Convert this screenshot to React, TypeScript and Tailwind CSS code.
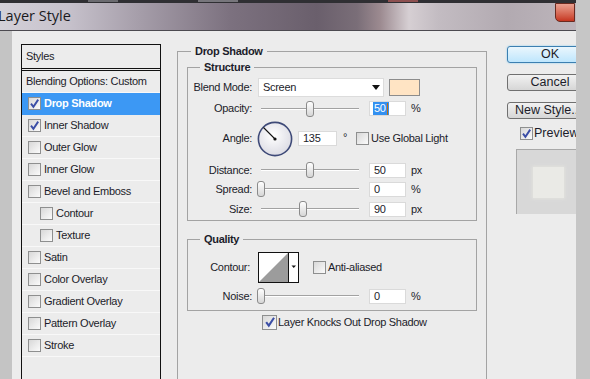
import React from "react";

function Check({ on }: { on?: boolean }) {
  return (
    <span className="flex h-[13px] w-[13px] shrink-0 items-center justify-center border border-[#8e8f8f] bg-linear-to-br from-[#d8d8d8] to-[#fbfbfb]">
      {on && (
        <svg viewBox="0 0 11 11" className="h-[11px] w-[11px]">
          <path d="M2 5.6 L4.4 8.8 L9.2 1.6" fill="none" stroke="#3b4ea6" strokeWidth="1.9" />
        </svg>
      )}
    </span>
  );
}

function Slider({ value, max }: { value: number; max: number }) {
  const left = Math.round((value / max) * 98);
  return (
    <div className="relative h-[18px] w-[106px] shrink-0">
      <div className="absolute left-[4px] right-[4px] top-[8px] h-[2px] border-t border-[#a2a2a2] bg-white" />
      <div
        className="absolute top-[1px] h-[16px] w-[8px] rounded-[3px] border border-[#8b8b8b] bg-linear-to-b from-white to-[#d6d6d6]"
        style={{ left }}
      />
    </div>
  );
}

function Field({ w, children, selected }: { w: string; children: React.ReactNode; selected?: boolean }) {
  return (
    <div className={`flex h-[15px] shrink-0 items-center border border-[#dadada] bg-white pl-[3px] ${w}`}>
      {selected ? (
        <span className="flex items-center bg-[#3390f0] px-[1px] leading-[13px] text-white">
          {children}
          <span className="ml-px h-[12px] w-px bg-[#c07010]" />
        </span>
      ) : (
        <span className="pl-[1px]">{children}</span>
      )}
    </div>
  );
}

function SliderRow({ label, value, max, unit }: { label: string; value: number; max: number; unit: string }) {
  return (
    <div className="flex h-[20px] items-center">
      <div className="w-[64px] shrink-0 text-right">{label}</div>
      <div className="ml-[5px]">
        <Slider value={value} max={max} />
      </div>
      <div className="ml-[6px]">
        <Field w="w-[37px]">{value}</Field>
      </div>
      <span className="ml-[5px]">{unit}</span>
    </div>
  );
}

const styles: { label: string; on?: boolean; sub?: boolean; active?: boolean }[] = [
  { label: "Drop Shadow", on: true, active: true },
  { label: "Inner Shadow", on: true },
  { label: "Outer Glow" },
  { label: "Inner Glow" },
  { label: "Bevel and Emboss" },
  { label: "Contour", sub: true },
  { label: "Texture", sub: true },
  { label: "Satin" },
  { label: "Color Overlay" },
  { label: "Gradient Overlay" },
  { label: "Pattern Overlay" },
  { label: "Stroke" },
];

export default function App() {
  return (
    <div className="flex h-[379px] w-[590px] overflow-hidden bg-[#c6c6c6] font-['Liberation_Sans',Arial,sans-serif] text-[11px] tracking-[-0.3px] text-[#1c1c2a]">
      <div className="flex w-[576px] shrink-0 flex-col">
        {/* window behind */}
        <div className="flex h-[3px] bg-[#2f2f33]">
          <div className="ml-[88px] h-[2px] w-[30px] bg-[#6b6b70]" />
          <div className="ml-[80px] h-[2px] w-[40px] bg-[#77767c]" />
          <div className="ml-[150px] h-[2px] w-[30px] bg-[#8d5050]" />
        </div>
        {/* title bar */}
        <div className="flex h-[27px] items-center bg-[linear-gradient(90deg,#d3d0d8_0%,#c6c1cb_12%,#a69eaa_24%,#7c717f_40%,#6a5f6c_55%,#7a6e78_62%,#9c8a90_66%,#d6cfd3_71%,#c3bcc2_76%,#b2aab1_88%,#bdb5bb_100%)]">
          <span className="ml-[-2px] text-[14.5px] leading-none tracking-normal text-[#1a1a1e] font-['Open_Sans',sans-serif]">Layer Style</span>
          <div className="ml-auto mr-px h-[19px] w-[20px] self-start rounded-bl-[5px] border border-[#6a2a20] bg-linear-to-b from-[#e9a090] to-[#c5341f]" />
        </div>
        <div className="h-px bg-[#4c4a50]" />

        <div className="flex min-h-0 flex-1">
          <div className="w-[12px] shrink-0 bg-[#c4c4c4]" />
          <div className="flex min-w-0 flex-1 overflow-hidden bg-[#ececec] pl-[9px] pt-[13px]">
            {/* Styles list */}
            <div className="w-[140px] shrink-0 self-stretch border border-b-0 border-[#111]">
              <div className="flex h-[23px] items-center pl-[4px]">Styles</div>
              <div className="h-[3px] border-y border-[#111]" />
              <div className="flex h-[22px] items-center border-b border-[#f8f8f8] pl-[4px]">Blending Options: Custom</div>
              {styles.map((s) => (
                <div
                  key={s.label}
                  className={`flex h-[22px] items-center gap-[2px] border-b ${
                    s.active ? "border-[#3c98f4] bg-[#3c98f4] font-bold text-white" : "border-[#f8f8f8]"
                  } ${s.sub ? "pl-[18px]" : "pl-[6px]"}`}
                >
                  <Check on={s.on} />
                  <span className="ml-px">{s.label}</span>
                </div>
              ))}
            </div>

            {/* Drop Shadow group */}
            <fieldset className="ml-[16px] h-[400px] w-[310px] shrink-0 border border-[#a3a3a3] px-[9px]">
              <legend className="ml-[4px] px-[4px] font-bold leading-[14px]">Drop Shadow</legend>

              <fieldset className="mt-[2px] border border-[#a3a3a3] pb-[1px]">
                <legend className="ml-[12px] px-[4px] font-bold leading-[14px]">Structure</legend>
                <div className="mt-[3px] flex h-[20px] items-center">
                  <div className="w-[64px] shrink-0 text-right">Blend Mode:</div>
                  <div className="ml-[6px] flex h-[19px] w-[126px] items-center justify-between border border-[#dcdcdc] bg-white pl-[4px] pr-[3px]">
                    <span>Screen</span>
                    <svg viewBox="0 0 8 5" className="h-[5px] w-[8px]">
                      <path d="M0 0 H8 L4 5 Z" fill="#111" />
                    </svg>
                  </div>
                  <div className="ml-[5px] h-[17px] w-[31px] border border-[#8c8c8c] bg-[#ffe4c4]" />
                </div>
                <div className="flex h-[23px] items-center">
                  <div className="w-[64px] shrink-0 text-right">Opacity:</div>
                  <div className="ml-[5px]">
                    <Slider value={50} max={100} />
                  </div>
                  <div className="ml-[6px]">
                    <Field w="w-[37px]" selected>
                      50
                    </Field>
                  </div>
                  <span className="ml-[5px]">%</span>
                </div>
                <div className="flex h-[37px] items-center">
                  <div className="w-[64px] shrink-0 text-right">Angle:</div>
                  <svg viewBox="0 0 36 36" className="ml-[5px] h-[36px] w-[36px] shrink-0">
                    <defs>
                      <radialGradient id="dial" cx="45%" cy="40%" r="60%">
                        <stop offset="0%" stopColor="#ffffff" />
                        <stop offset="100%" stopColor="#dcdce4" />
                      </radialGradient>
                    </defs>
                    <circle cx="18" cy="18" r="16.6" fill="url(#dial)" stroke="#3e4a78" strokeWidth="1.6" />
                    <line x1="18" y1="18" x2="6.5" y2="6.5" stroke="#111" strokeWidth="1.1" />
                    <circle cx="18" cy="18" r="1.6" fill="#111" />
                  </svg>
                  <div className="ml-[5px]">
                    <Field w="w-[39px]">135</Field>
                  </div>
                  <span className="ml-[6px] self-start pt-[9px]">°</span>
                  <div className="ml-[9px]">
                    <Check />
                  </div>
                  <span className="ml-[2px]">Use Global Light</span>
                </div>
                <div className="mt-[3px] flex flex-col">
                  <SliderRow label="Distance:" value={50} max={100} unit="px" />
                  <div className="-mt-px">
                    <SliderRow label="Spread:" value={0} max={100} unit="%" />
                  </div>
                  <SliderRow label="Size:" value={90} max={210} unit="px" />
                </div>
              </fieldset>

              <fieldset className="mt-[11px] border border-[#a3a3a3] pb-[4px]">
                <legend className="ml-[12px] px-[4px] font-bold leading-[14px]">Quality</legend>
                <div className="mt-[6px] flex h-[31px] items-center">
                  <div className="w-[62px] shrink-0 text-right">Contour:</div>
                  <svg viewBox="0 0 41 31" className="ml-[8px] h-[31px] w-[41px] shrink-0">
                    <rect x="0.5" y="0.5" width="40" height="30" fill="#fff" stroke="#111" />
                    <polygon points="1,30 30,1 30,30" fill="#9c9c9c" />
                    <line x1="30.5" y1="0" x2="30.5" y2="31" stroke="#111" />
                    <path d="M33.5 13.5 H38 L35.75 16 Z" fill="#111" />
                  </svg>
                  <div className="ml-[14px]">
                    <Check />
                  </div>
                  <span className="ml-[2px]">Anti-aliased</span>
                </div>
                <div className="mt-[3px]">
                  <SliderRow label="Noise:" value={0} max={100} unit="%" />
                </div>
              </fieldset>

              <div className="mt-[3px] flex items-center">
                <div className="ml-[75px]">
                  <span className="flex h-[15px] w-[15px] items-center justify-center border border-[#8e8f8f] bg-linear-to-br from-[#d8d8d8] to-[#fbfbfb]">
                    <svg viewBox="0 0 11 11" className="h-[12px] w-[12px]">
                      <path d="M2 5.6 L4.4 8.8 L9.2 1.6" fill="none" stroke="#3b4ea6" strokeWidth="1.9" />
                    </svg>
                  </span>
                </div>
                <span className="ml-[1px]">Layer Knocks Out Drop Shadow</span>
              </div>
            </fieldset>

            {/* buttons + preview */}
            <div className="ml-[20px] flex w-[86px] shrink-0 flex-col text-[12.5px] tracking-normal">
              <div className="mt-[2px] flex h-[17px] items-center justify-center rounded-[3px] border border-[#3c7fb1] bg-linear-to-b from-[#eaf6fd] to-[#bee6fd] shadow-[0_0_2px_#7fc8f0]">
                OK
              </div>
              <div className="mt-[11px] flex h-[17px] items-center justify-center rounded-[3px] border border-[#707070] bg-linear-to-b from-[#f2f2f2] to-[#d6d6d6]">
                Cancel
              </div>
              <div className="mt-[11px] flex h-[17px] items-center justify-start whitespace-nowrap rounded-[3px] border border-[#707070] bg-linear-to-b from-[#f2f2f2] to-[#d6d6d6] pl-[7px]">
                New Style...
              </div>
              <div className="mt-[8px] flex items-center">
                <div className="ml-[13px]">
                  <Check on />
                </div>
                <span className="ml-[1px] leading-[13px]">Preview</span>
              </div>
              <div className="ml-[9px] mt-[9px] flex h-[65px] w-[80px] items-center border-l border-t border-[#a8a8a8] bg-[#d8d8d8] pl-[16px]">
                <div className="h-[31px] w-[31px] bg-[#eaeae6] shadow-[0_0_3px_1px_#e2e2de]" />
              </div>
            </div>
          </div>
        </div>
      </div>
      <div className="flex-1 bg-[#c6c6c6]" />
    </div>
  );
}
